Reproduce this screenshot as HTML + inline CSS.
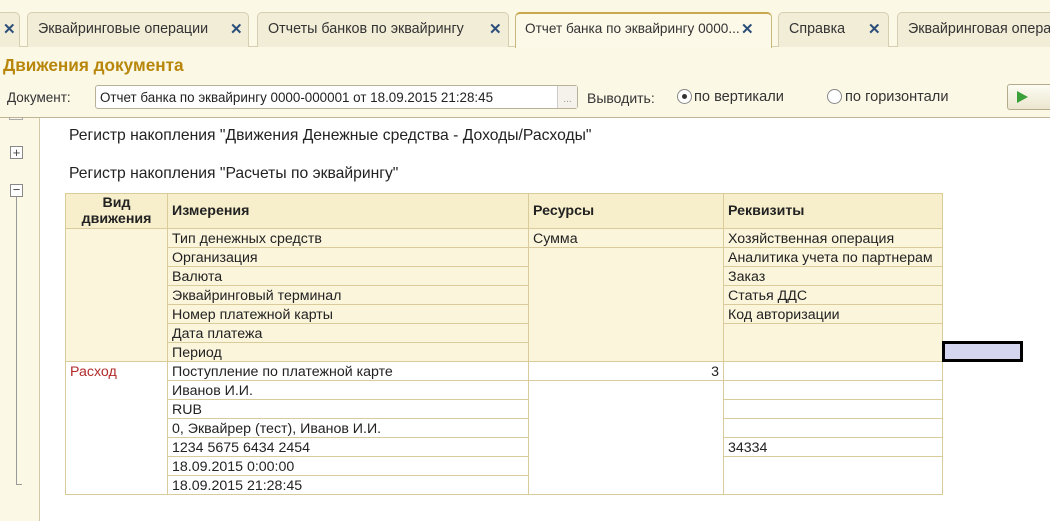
<!DOCTYPE html>
<html><head><meta charset="utf-8"><style>
*{margin:0;padding:0;box-sizing:border-box}
body{width:1050px;height:521px;overflow:hidden;background:#fbf8e6;font-family:"Liberation Sans",Arial,sans-serif;font-size:14px;color:#222;position:relative}
.a{position:absolute;white-space:nowrap}
.tab{position:absolute;top:12px;height:35px;background:#f2edd7;border:1px solid #d6ceb0;border-bottom:none;border-radius:5px 5px 0 0;padding:8px 0 0 10px;color:#333;font-size:14.3px;white-space:nowrap;overflow:hidden}
.tab .x{position:absolute;top:7px;color:#2c4f7a;font-weight:bold;font-size:15px}
.cell{position:absolute;border-right:1px solid #d9cc9a;border-bottom:1px solid #d9cc9a;padding:2px 0 0 4px;font-size:14.2px;white-space:nowrap;overflow:hidden;line-height:17px}
.h{background:#f7efcc;font-weight:bold}
.y{background:#fbf5dc}
.w{background:#fff}
</style></head><body>
<div class="a" style="left:0;top:46px;width:1050px;height:1px;background:#d6ceb0"></div>
<div class="tab" style="left:-10px;width:30px"><span class="x" style="left:12px">✕</span></div>
<div class="tab" style="left:27px;width:222px">Эквайринговые операции<span class="x" style="left:202px">✕</span></div>
<div class="tab" style="left:257px;width:252px">Отчеты банков по эквайрингу<span class="x" style="left:231px">✕</span></div>
<div class="tab" style="left:515px;width:257px;background:#fcf9e9;border-color:#c9b77a;border-top:2px solid #c9a84e;height:36px;padding-left:9px;padding-top:7px;font-size:13.6px">Отчет банка по эквайрингу 0000...<span class="x" style="left:225px;top:6px">✕</span></div>
<div class="tab" style="left:778px;width:111px">Справка<span class="x" style="left:89px">✕</span></div>
<div class="tab" style="left:897px;width:160px">Эквайринговая операция</div>
<div class="a" style="left:3px;top:55px;font-size:17.2px;font-weight:bold;color:#b8860b">Движения документа</div>
<div class="a" style="left:7px;top:90px;color:#333;font-size:13.5px">Документ:</div>
<div class="a" style="left:95px;top:85px;width:483px;height:24px;background:#fff;border:1px solid #b9b09a;border-radius:3px;padding:4px 0 0 4px;color:#222;font-size:13.4px">Отчет банка по эквайрингу 0000-000001 от 18.09.2015 21:28:45</div>
<div class="a" style="left:557px;top:86px;width:20px;height:22px;border-left:1px solid #ccc;background:#f4f2ea;color:#999;font-size:10px;text-align:center;padding-top:8px">...</div>
<div class="a" style="left:587px;top:90px;color:#333;font-size:14px">Выводить:</div>
<div class="a" style="left:677px;top:89px;width:15px;height:15px;border:1px solid #888;border-radius:50%;background:#fff"><div style="width:5px;height:5px;background:#333;border-radius:50%;margin:4px"></div></div>
<div class="a" style="left:694px;top:89px;color:#333;font-size:14.6px">по вертикали</div>
<div class="a" style="left:827px;top:89px;width:15px;height:15px;border:1px solid #888;border-radius:50%;background:#fff"></div>
<div class="a" style="left:845px;top:89px;color:#333;font-size:14.6px">по горизонтали</div>
<div class="a" style="left:1007px;top:84px;width:50px;height:26px;border:1px solid #b5ab8c;border-radius:3px;background:linear-gradient(#fdfcf4,#ebe6cf)"><div style="position:absolute;left:9px;top:6px;width:0;height:0;border-left:11px solid #3aa03a;border-top:6px solid transparent;border-bottom:6px solid transparent"></div></div>
<div class="a" style="left:0;top:117px;width:1050px;height:1px;background:#bfb594"></div>
<div class="a" style="left:39px;top:118px;width:1011px;height:403px;background:#fff;border-left:1px solid #d2c9a8"></div>
<div class="a" style="left:9px;top:117px;width:14px;height:3px;border:1px solid #aaa;border-top:none"></div>
<div class="a" style="left:10px;top:146px;width:13px;height:13px;border:1px solid #888;background:#fff;font-size:13px;line-height:11px;text-align:center;color:#444">+</div>
<div class="a" style="left:10px;top:184px;width:13px;height:13px;border:1px solid #888;background:#fff;font-size:13px;line-height:10px;text-align:center;color:#444">−</div>
<div class="a" style="left:16px;top:197px;width:1px;height:288px;background:#999"></div>
<div class="a" style="left:16px;top:484px;width:6px;height:1px;background:#999"></div>
<div class="a" style="left:69px;top:127px;font-size:15.7px">Регистр накопления "Движения Денежные средства - Доходы/Расходы"</div>
<div class="a" style="left:69px;top:165px;font-size:15.7px">Регистр накопления "Расчеты по эквайрингу"</div>
<div class="a" style="left:65px;top:193px;width:878px;height:302px;border-left:1px solid #d9cc9a;border-top:1px solid #d9cc9a"></div>
<div class="cell h" style="left:66px;top:194px;width:102px;height:35px;text-align:center;padding:1px 0 0 0;line-height:16px">Вид<br>движения</div>
<div class="cell h" style="left:168px;top:194px;width:361px;height:35px;padding-top:9px">Измерения</div>
<div class="cell h" style="left:529px;top:194px;width:195px;height:35px;padding-top:9px">Ресурсы</div>
<div class="cell h" style="left:724px;top:194px;width:219px;height:35px;padding-top:9px">Реквизиты</div>
<div class="cell y" style="left:66px;top:229px;width:102px;height:133px"></div>
<div class="cell y" style="left:168px;top:229px;width:361px;height:19px">Тип денежных средств</div>
<div class="cell y" style="left:168px;top:248px;width:361px;height:19px">Организация</div>
<div class="cell y" style="left:168px;top:267px;width:361px;height:19px">Валюта</div>
<div class="cell y" style="left:168px;top:286px;width:361px;height:19px">Эквайринговый терминал</div>
<div class="cell y" style="left:168px;top:305px;width:361px;height:19px">Номер платежной карты</div>
<div class="cell y" style="left:168px;top:324px;width:361px;height:19px">Дата платежа</div>
<div class="cell y" style="left:168px;top:343px;width:361px;height:19px">Период</div>
<div class="cell y" style="left:529px;top:229px;width:195px;height:19px">Сумма</div>
<div class="cell y" style="left:529px;top:248px;width:195px;height:114px"></div>
<div class="cell y" style="left:724px;top:229px;width:219px;height:19px">Хозяйственная операция</div>
<div class="cell y" style="left:724px;top:248px;width:219px;height:19px">Аналитика учета по партнерам</div>
<div class="cell y" style="left:724px;top:267px;width:219px;height:19px">Заказ</div>
<div class="cell y" style="left:724px;top:286px;width:219px;height:19px">Статья ДДС</div>
<div class="cell y" style="left:724px;top:305px;width:219px;height:19px">Код авторизации</div>
<div class="cell y" style="left:724px;top:324px;width:219px;height:38px"></div>
<div class="cell w" style="left:66px;top:362px;width:102px;height:133px;color:#b22a2a">Расход</div>
<div class="cell w" style="left:168px;top:362px;width:361px;height:19px">Поступление по платежной карте</div>
<div class="cell w" style="left:168px;top:381px;width:361px;height:19px">Иванов И.И.</div>
<div class="cell w" style="left:168px;top:400px;width:361px;height:19px">RUB</div>
<div class="cell w" style="left:168px;top:419px;width:361px;height:19px">0, Эквайрер (тест), Иванов И.И.</div>
<div class="cell w" style="left:168px;top:438px;width:361px;height:19px">1234 5675 6434 2454</div>
<div class="cell w" style="left:168px;top:457px;width:361px;height:19px">18.09.2015 0:00:00</div>
<div class="cell w" style="left:168px;top:476px;width:361px;height:19px">18.09.2015 21:28:45</div>
<div class="cell w" style="left:529px;top:362px;width:195px;height:19px;text-align:right;padding-right:4px">3</div>
<div class="cell w" style="left:529px;top:381px;width:195px;height:114px"></div>
<div class="cell w" style="left:724px;top:362px;width:219px;height:19px"></div>
<div class="cell w" style="left:724px;top:381px;width:219px;height:19px"></div>
<div class="cell w" style="left:724px;top:400px;width:219px;height:19px"></div>
<div class="cell w" style="left:724px;top:419px;width:219px;height:19px"></div>
<div class="cell w" style="left:724px;top:438px;width:219px;height:19px">34334</div>
<div class="cell w" style="left:724px;top:457px;width:219px;height:38px"></div>
<div class="a" style="left:942px;top:341px;width:81px;height:21px;border:3px solid #000;background:#d3d6ee"></div>
</body></html>
